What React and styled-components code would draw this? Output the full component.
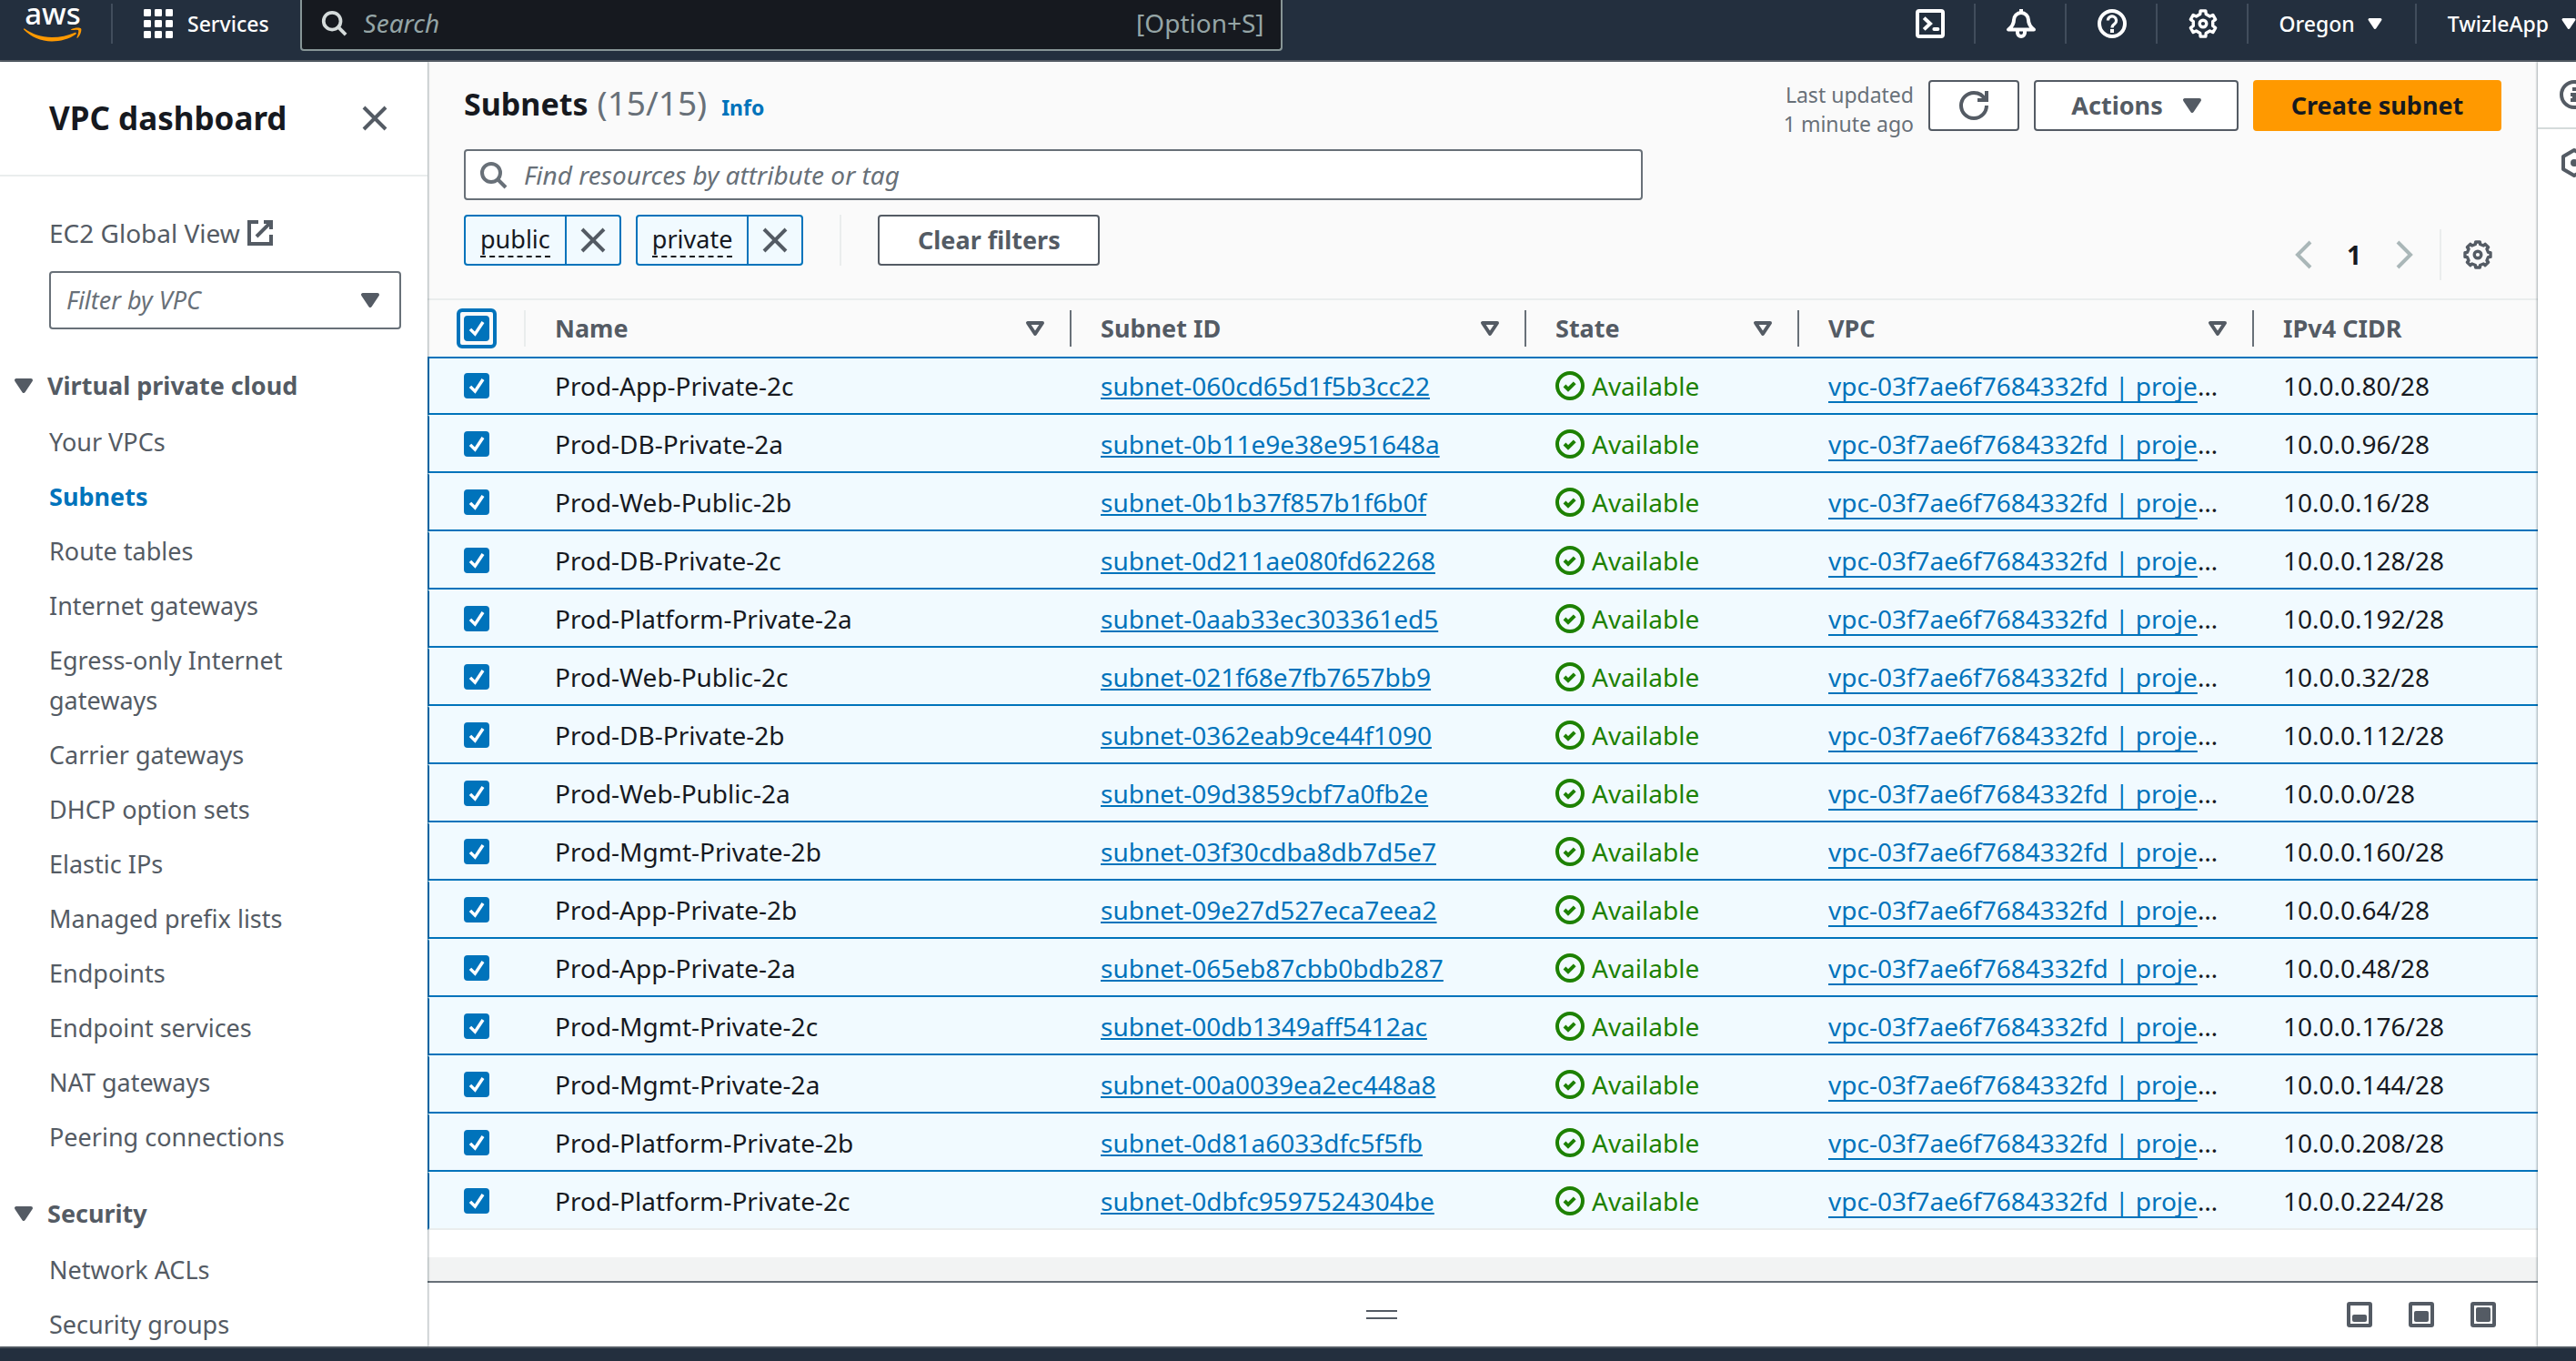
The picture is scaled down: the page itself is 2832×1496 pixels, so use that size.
import React from "react";
import styled, { createGlobalStyle, css } from "styled-components";

const c = {
  ink: "#16191f",
  slate: "#545b64",
  gray: "#687078",
  line: "#eaeded",
  blue: "#0073bb",
  selected: "#f1faff",
  green: "#1d8102",
  orange: "#ff9900",
  nav: "#232f3e",
  panel: "#fafafa",
  disabled: "#aab7b8",
};

const GlobalStyle = createGlobalStyle`
  *, *::before, *::after { box-sizing: border-box; }
  body {
    margin: 0;
    font-family: "Noto Sans", "Open Sans", sans-serif;
    font-size: 28px;
    line-height: 44px;
    color: ${c.ink};
    background: #fff;
  }
  button, input, select { font: inherit; color: inherit; margin: 0; }
  button { padding: 0; border: 0; background: none; cursor: pointer; }
  h1, h2, h3, ul { margin: 0; padding: 0; font: inherit; list-style: none; }
  svg { display: block; flex: none; }
`;

/* ---------- icons ---------- */

const Svg = styled.svg.attrs({ viewBox: "0 0 16 16", "aria-hidden": true })`
  width: ${(p) => p.$size || 32}px;
  height: ${(p) => p.$size || 32}px;
  fill: none;
  stroke: currentColor;
  stroke-width: ${(p) => p.$stroke || 2};
  overflow: visible;
`;

function gearPath(teeth, outer, inner, topHalf, baseHalf) {
  const pts = [];
  for (let i = 0; i < teeth; i++) {
    const a = -Math.PI / 2 + (i * 2 * Math.PI) / teeth;
    [
      [inner, -baseHalf],
      [outer, -topHalf],
      [outer, topHalf],
      [inner, baseHalf],
    ].forEach(([r, d]) => {
      pts.push(`${(8 + r * Math.cos(a + d)).toFixed(2)} ${(8 + r * Math.sin(a + d)).toFixed(2)}`);
    });
  }
  return `M${pts.join("L")}Z`;
}

const NavGear = gearPath(6, 7.2, 5.5, 0.2, 0.3);
const TableGear = gearPath(8, 7.1, 5.9, 0.17, 0.22);

const CloseIcon = () => (
  <Svg><path d="m2 2 12 12M14 2 2 14" /></Svg>
);
const SearchIcon = ({ size }) => (
  <Svg $size={size}><circle cx="7" cy="7" r="5" /><path d="m15 15-4.5-4.5" /></Svg>
);
const CaretFilled = ({ size }) => (
  <Svg $size={size}><path d="M4 5h8l-4 6z" fill="currentColor" strokeLinejoin="round" /></Svg>
);
const CaretOpen = () => (
  <Svg><path d="M4 5h8l-4 6z" strokeLinejoin="round" /></Svg>
);
const ExternalIcon = () => (
  <Svg><path d="M10 2h4v4M6 10l8-8M14 9v5H2V2h5" /></Svg>
);
const RefreshIcon = () => (
  <Svg><path d="M10 5h5V0" /><path d="M15 8a7 7 0 1 1-7-7 6.9 6.9 0 0 1 6.3 4" /></Svg>
);
const GearIcon = ({ d }) => (
  <Svg $stroke={1.7}><path d={d} strokeLinejoin="round" /><circle cx="8" cy="8" r="1.9" /></Svg>
);
const AngleLeft = () => (
  <Svg><path d="M11 1 4 8l7 7" /></Svg>
);
const AngleRight = () => (
  <Svg><path d="m5 1 7 7-7 7" /></Svg>
);
const StatusIcon = () => (
  <Svg><circle cx="8" cy="8" r="7" /><path d="m5 8 2 2 3.6-3.6" /></Svg>
);
const ShellIcon = () => (
  <Svg><rect x="1" y="1" width="14" height="14" rx="1" /><path d="m4.6 4.8 3.4 3.2-3.4 3.2" /><path d="M10.2 11h2" strokeLinecap="round" /></Svg>
);
const BellIcon = () => (
  <Svg>
    <path d="M8 0v2" />
    <path d="M8 2a4 4 0 0 0-4 4c0 2.400-1.200 3.900-3 5.300h14c-1.800-1.400-3-2.900-3-5.300a4 4 0 0 0-4-4z" strokeLinejoin="round" />
    <path d="M6 11.800v1.200a2 2 0 0 0 4 0v-1.200" />
  </Svg>
);
const HelpIcon = () => (
  <Svg>
    <circle cx="8" cy="8" r="7" />
    <path d="M5.700 6.300a2.300 2.300 0 1 1 3.700 1.800c-.9.600-1.400.9-1.400 2.200" strokeWidth="1.600" />
    <path d="M7 12h2" />
  </Svg>
);
const InfoIcon = () => (
  <Svg><circle cx="8" cy="8" r="7" /><path d="M8 11V8H6M6 11h4M7 5h2" /></Svg>
);
const HexIcon = () => (
  <Svg><path d="M8 1 14 4.500v7L8 15l-6-3.500v-7z" strokeLinejoin="round" /><circle cx="8" cy="8" r="1" /></Svg>
);
const GridIcon = () => (
  <Svg>
    {[0, 6, 12].map((y) =>
      [0, 6, 12].map((x) => (
        <rect key={`${x}-${y}`} x={x} y={y} width="4" height="4" rx="0.6" fill="currentColor" stroke="none" />
      ))
    )}
  </Svg>
);

/* ---------- shell ---------- */

const Shell = styled.div`
  display: flex;
  flex-direction: column;
  height: 100vh;
  overflow: hidden;
`;

const Body = styled.div`
  flex: 1;
  min-height: 0;
  display: flex;
`;

const Footer = styled.footer`
  flex: none;
  height: 16px;
  background: ${c.nav};
  border-top: 2px solid ${c.slate};
`;

/* ---------- top navigation ---------- */

const TopNav = styled.header`
  flex: none;
  display: flex;
  align-items: flex-start;
  height: 68px;
  background: ${c.nav};
  border-bottom: 2px solid ${c.slate};
  color: #fff;
  font-size: 23px;
  line-height: 32px;
`;

const Logo = styled.a`
  display: flex;
  flex-direction: column;
  align-items: center;
  width: 64px;
  margin: 0 32px 0 26px;
  color: #fff;
  text-decoration: none;
  font-size: 33px;
  font-weight: 500;
  line-height: 30px;
`;

const Smile = styled.svg`
  width: 64px;
  height: 16px;
`;

const NavDivider = styled.span`
  width: 2px;
  height: 44px;
  margin-top: 4px;
  background: #414d5c;
`;

const ServicesButton = styled.button`
  display: flex;
  align-items: center;
  gap: 16px;
  height: 52px;
  padding: 0 34px;
  font-weight: 500;
`;

const NavSearch = styled.label`
  flex: 0 1 1080px;
  display: flex;
  align-items: center;
  gap: 18px;
  height: 56px;
  padding: 0 18px 4px 20px;
  background: #16191f;
  border: 2px solid #879596;
  border-top: 0;
  border-radius: 0 0 4px 4px;
  font-size: 28px;
  color: #95a5a6;

  svg { color: #d5dbdb; }
`;

const NavSearchInput = styled.input`
  flex: 1;
  min-width: 0;
  border: 0;
  outline: 0;
  padding: 0;
  background: transparent;
  &::placeholder { color: #95a5a6; font-style: italic; opacity: 1; }
`;

const NavTools = styled.nav`
  display: flex;
  margin-left: auto;
`;

const NavItem = styled.button`
  display: flex;
  align-items: center;
  gap: 10px;
  height: 44px;
  margin-top: 4px;
  padding: 0 32px 0 34px;
  border-right: 2px solid #414d5c;
  font-weight: 500;
  white-space: nowrap;
  &:last-child { padding-right: 0; border-right: 0; margin-right: -4px; }
`;

/* ---------- side navigation ---------- */

const Side = styled.aside`
  flex: none;
  width: 470px;
  overflow: hidden;
  background: #fff;
  box-shadow: 1px 0 2px rgba(0, 28, 36, 0.35);
  z-index: 1;
  color: ${c.slate};
  font-size: 27px;
`;

const SideHeader = styled.div`
  display: flex;
  align-items: center;
  justify-content: space-between;
  height: 126px;
  padding: 0 42px 0 54px;
  border-bottom: 2px solid ${c.line};
`;

const SideTitle = styled.h2`
  font-size: 35px;
  font-weight: 700;
  color: ${c.ink};
`;

const IconButton = styled.button`
  display: grid;
  place-items: center;
  color: ${(p) => (p.$muted ? c.disabled : c.slate)};
`;

const SideTop = styled.div`
  padding: 40px 29px 0 54px;
  font-size: 28px;
`;

const SideLink = styled.a`
  display: flex;
  align-items: center;
  gap: 6px;
  color: ${c.slate};
  text-decoration: none;
  ${(p) =>
    p.$current &&
    css`
      color: ${c.blue};
      font-weight: 700;
    `}
`;

const SelectBox = styled.div`
  display: grid;
  align-items: center;
  margin-top: 20px;
  & > * { grid-area: 1 / 1; }
  svg { justify-self: end; margin-right: 18px; pointer-events: none; }
`;

const Select = styled.select`
  appearance: none;
  width: 100%;
  height: 64px;
  padding: 0 60px 0 17px;
  border: 2px solid ${c.gray};
  border-radius: 4px;
  background: #fff;
  color: ${c.gray};
  font-size: 27px;
  font-style: italic;
`;

const Section = styled.section`
  padding: ${(p) => (p.$first ? 40 : 32)}px 60px 0 10px;
`;

const SectionTitle = styled.button`
  display: flex;
  align-items: center;
  gap: 10px;
  font-weight: 700;
  line-height: 44px;
`;

const NavList = styled.ul`
  && { padding: 10px 0 0 44px; }
  li { padding: 8px 0; }
`;

/* ---------- main ---------- */

const Main = styled.main`
  flex: 1;
  min-width: 0;
  display: flex;
  flex-direction: column;
  background: #fff;
`;

const PageHeader = styled.div`
  padding: 20px 40px;
  background: ${c.panel};
  border-bottom: 2px solid ${c.line};
`;

const TitleRow = styled.div`
  display: flex;
  align-items: flex-start;
  justify-content: space-between;
`;

const Title = styled.div`
  display: flex;
  align-items: baseline;
  gap: 10px;
  font-size: 37px;
  line-height: 50px;
  h1 { font-weight: 700; font-size: 34px; }
  span { color: ${c.gray}; }
`;

const InfoLink = styled.a`
  margin-left: 6px;
  font-size: 23px;
  font-weight: 700;
  color: ${c.blue};
  text-decoration: none;
`;

const Actions = styled.div`
  display: flex;
  gap: 16px;
`;

const Updated = styled.div`
  display: flex;
  flex-direction: column;
  align-items: flex-end;
  font-size: 23px;
  line-height: 32px;
  color: ${c.gray};
  white-space: nowrap;
`;

const Button = styled.button`
  display: flex;
  align-items: center;
  justify-content: center;
  gap: 16px;
  height: 56px;
  min-width: ${(p) => p.$min || 0}px;
  padding: ${(p) => (p.$menu ? "0 30px 0 36px" : "0 16px")};
  border: 2px solid ${(p) => (p.$primary ? c.orange : c.slate)};
  border-radius: 4px;
  background: ${(p) => (p.$primary ? c.orange : "#fff")};
  color: ${(p) => (p.$primary ? c.ink : c.slate)};
  font-weight: 700;
  font-size: 27px;
  white-space: nowrap;
`;

const Toolbar = styled.div`
  display: flex;
  align-items: flex-end;
  justify-content: space-between;
  gap: 40px;
  margin-top: 12px;
`;

const Filters = styled.div`
  flex: 0 1 1296px;
  display: flex;
  flex-direction: column;
  gap: 16px;
  padding-bottom: 16px;
`;

const SearchBox = styled.label`
  display: flex;
  align-items: center;
  gap: 18px;
  height: 56px;
  padding: 0 14px;
  border: 2px solid ${c.gray};
  border-radius: 4px;
  background: #fff;
  color: ${c.gray};
`;

const SearchInput = styled.input`
  flex: 1;
  min-width: 0;
  border: 0;
  outline: 0;
  padding: 0;
  background: transparent;
  &::placeholder { color: ${c.gray}; font-style: italic; opacity: 1; }
`;

const Tokens = styled.div`
  display: flex;
  gap: 16px;
`;

const Token = styled.div`
  display: flex;
  height: 56px;
  border: 2px solid ${c.blue};
  border-radius: 4px;
  background: ${c.selected};
`;

const TokenText = styled.button`
  margin: 7px 16px 0;
  height: 38px;
  font-size: 27px;
  line-height: 36px;
  border-bottom: 2px dashed ${c.ink};
`;

const TokenRemove = styled.button`
  display: grid;
  place-items: center;
  width: 60px;
  border-left: 2px solid ${c.blue};
  color: ${c.slate};
`;

const Rule = styled.span`
  width: 2px;
  height: 56px;
  margin: 0 24px;
  background: ${c.line};
`;

const Pagination = styled.div`
  display: flex;
  align-items: center;
  height: 56px;
  padding-right: 10px;
`;

const PageNumber = styled.button`
  width: 76px;
  font-weight: 700;
  text-align: center;
`;

/* ---------- table ---------- */

const Table = styled.table`
  width: 100%;
  table-layout: fixed;
  border-collapse: separate;
  border-spacing: 0;
  text-align: left;
`;

const Col = styled.col`
  width: ${(p) => (p.$w ? `${p.$w}px` : "auto")};
`;

const Th = styled.th`
  height: 62px;
  padding: 0;
  background: ${c.panel};
  color: ${c.slate};
  font-size: 27px;
  font-weight: 700;
`;

const ThInner = styled.div`
  display: flex;
  align-items: center;
  justify-content: space-between;
  height: 40px;
  padding: 0 22px 0 32px;
  border-right: ${(p) => (p.$last ? "0" : `2px solid ${p.$check ? c.line : c.gray}`)};
`;

const Td = styled.td`
  height: 64px;
  padding: 0 22px 0 32px;
  background: ${c.selected};
  border-top: 2px solid transparent;
  border-bottom: 2px solid ${c.blue};
  white-space: nowrap;

  &:first-child { padding-left: 38px; border-left: 2px solid ${c.blue}; }
  tr:first-child > & { border-top-color: ${c.blue}; }
  tr:last-child > & { border-bottom-color: ${c.line}; }
`;

const Check = styled.span`
  display: grid;
  place-items: center;
  width: ${(p) => (p.$focus ? 44 : 28)}px;
  height: ${(p) => (p.$focus ? 44 : 28)}px;
  & > * { grid-area: 1 / 1; }
  ${(p) =>
    p.$focus &&
    css`
      flex: none;
      border: 4px solid ${c.blue};
      border-radius: 6px;
    `}
  svg { pointer-events: none; color: #fff; visibility: hidden; }
  input:checked + svg { visibility: visible; }
`;

const CheckInput = styled.input`
  appearance: none;
  width: 28px;
  height: 28px;
  border: 2px solid ${c.gray};
  border-radius: 4px;
  background: #fff;
  &:checked { background: ${c.blue}; border-color: ${c.blue}; }
`;

const Link = styled.a`
  color: ${c.blue};
  text-decoration: underline;
  text-decoration-thickness: 2px;
  text-decoration-skip-ink: none;
  text-underline-offset: ${(p) => (p.$low ? 6 : 2)}px;
`;

const Status = styled.span`
  display: flex;
  align-items: center;
  gap: 8px;
  color: ${c.green};
`;

/* ---------- bottom split panel ---------- */

const Gap = styled.div`
  flex: none;
  height: 30px;
`;

const Backdrop = styled.div`
  flex: 1;
  background: #f2f3f3;
`;

const SplitPanel = styled.div`
  flex: none;
  display: flex;
  align-items: center;
  height: 72px;
  border-top: 2px solid ${c.gray};
  color: ${c.slate};
`;

const DragArea = styled.div`
  flex: 1;
  display: grid;
  place-items: center;
`;

const DragHandle = styled.button`
  width: 34px;
  height: 10px;
  border-top: 2px solid ${c.slate};
  border-bottom: 2px solid ${c.slate};
`;

const SizeButtons = styled.div`
  display: flex;
  gap: 40px;
  padding: 0 46px 0 12px;
  svg { width: 28px; height: 28px; fill: currentColor; }
`;

const ToolPanel = styled.aside`
  flex: none;
  width: 42px;
  overflow: hidden;
  background: #fff;
  box-shadow: -1px 0 2px rgba(0, 28, 36, 0.35);
  color: ${c.slate};
  z-index: 1;
`;

const ToolButton = styled.button`
  display: flex;
  align-items: center;
  width: 80px;
  height: 74px;
  padding-left: 24px;
  border-bottom: ${(p) => (p.$line ? "2px solid #d5dbdb" : "0")};
`;

/* ---------- data ---------- */

const VPC_LINKS = [
  "Your VPCs",
  "Subnets",
  "Route tables",
  "Internet gateways",
  "Egress-only Internet gateways",
  "Carrier gateways",
  "DHCP option sets",
  "Elastic IPs",
  "Managed prefix lists",
  "Endpoints",
  "Endpoint services",
  "NAT gateways",
  "Peering connections",
];
const SECURITY_LINKS = ["Network ACLs", "Security groups"];

const ROWS = [
  ["Prod-App-Private-2c", "subnet-060cd65d1f5b3cc22", "10.0.0.80/28"],
  ["Prod-DB-Private-2a", "subnet-0b11e9e38e951648a", "10.0.0.96/28"],
  ["Prod-Web-Public-2b", "subnet-0b1b37f857b1f6b0f", "10.0.0.16/28"],
  ["Prod-DB-Private-2c", "subnet-0d211ae080fd62268", "10.0.0.128/28"],
  ["Prod-Platform-Private-2a", "subnet-0aab33ec303361ed5", "10.0.0.192/28"],
  ["Prod-Web-Public-2c", "subnet-021f68e7fb7657bb9", "10.0.0.32/28"],
  ["Prod-DB-Private-2b", "subnet-0362eab9ce44f1090", "10.0.0.112/28"],
  ["Prod-Web-Public-2a", "subnet-09d3859cbf7a0fb2e", "10.0.0.0/28"],
  ["Prod-Mgmt-Private-2b", "subnet-03f30cdba8db7d5e7", "10.0.0.160/28"],
  ["Prod-App-Private-2b", "subnet-09e27d527eca7eea2", "10.0.0.64/28"],
  ["Prod-App-Private-2a", "subnet-065eb87cbb0bdb287", "10.0.0.48/28"],
  ["Prod-Mgmt-Private-2c", "subnet-00db1349aff5412ac", "10.0.0.176/28"],
  ["Prod-Mgmt-Private-2a", "subnet-00a0039ea2ec448a8", "10.0.0.144/28"],
  ["Prod-Platform-Private-2b", "subnet-0d81a6033dfc5f5fb", "10.0.0.208/28"],
  ["Prod-Platform-Private-2c", "subnet-0dbfc9597524304be", "10.0.0.224/28"],
];

const COLUMNS = ["Name", "Subnet ID", "State", "VPC", "IPv4 CIDR"];

function Checkbox({ label, focus }) {
  return (
    <Check $focus={focus}>
      <CheckInput type="checkbox" defaultChecked aria-label={label} />
      <Svg $size={28}><path d="m4 8.500 3 3 5-7.500" /></Svg>
    </Check>
  );
}

function SideSection({ title, links, current, first }) {
  return (
    <Section $first={first}>
      <SectionTitle><CaretFilled />{title}</SectionTitle>
      <NavList>
        {links.map((l) => (
          <li key={l}><SideLink href="#" $current={l === current}>{l}</SideLink></li>
        ))}
      </NavList>
    </Section>
  );
}

export default function App() {
  return (
    <Shell>
      <GlobalStyle />
      <TopNav>
        <Logo href="#" aria-label="aws">
          aws
          <Smile viewBox="0 0 64 16" fill="#ff9900" aria-hidden="true">
            <path d="M1 1.500c9 6 18 9.500 30 9.500 9 0 18-2 25-5 1.500-.6 2.500.8 1.200 1.800C50 13 40 15.500 31 15.500 19 15.500 8 10.500.4 2.800-.3 2 .2 1 1 1.500z" />
            <path d="M52 2.500C55.500.3 61.500 0 63 1.200c1.200 1.300-.3 7.600-3.500 10.400-.7.500-1.300.2-1-.6.9-2.300 2.400-6.600 1.600-7.700-.8-1-5-.5-7.400-.2-.8.1-1.200-.2-.7-.6z" />
          </Smile>
        </Logo>
        <NavDivider />
        <ServicesButton><GridIcon />Services</ServicesButton>
        <NavSearch>
          <SearchIcon size={30} />
          <NavSearchInput type="text" placeholder="Search" aria-label="Search" />
          <span>[Option+S]</span>
        </NavSearch>
        <NavTools>
          <NavItem aria-label="CloudShell"><ShellIcon /></NavItem>
          <NavItem aria-label="Notifications"><BellIcon /></NavItem>
          <NavItem aria-label="Support"><HelpIcon /></NavItem>
          <NavItem aria-label="Settings"><GearIcon d={NavGear} /></NavItem>
          <NavItem>Oregon<CaretFilled size={24} /></NavItem>
          <NavItem>TwizleApp<CaretFilled size={24} /></NavItem>
        </NavTools>
      </TopNav>

      <Body>
        <Side>
          <SideHeader>
            <SideTitle>VPC dashboard</SideTitle>
            <IconButton aria-label="Close"><CloseIcon /></IconButton>
          </SideHeader>
          <SideTop>
            <SideLink href="#">EC2 Global View<ExternalIcon /></SideLink>
            <SelectBox>
              <Select aria-label="Filter by VPC"><option>Filter by VPC</option></Select>
              <CaretFilled />
            </SelectBox>
          </SideTop>
          <SideSection first title="Virtual private cloud" links={VPC_LINKS} current="Subnets" />
          <SideSection title="Security" links={SECURITY_LINKS} />
        </Side>

        <Main>
          <PageHeader>
            <TitleRow>
              <Title>
                <h1>Subnets</h1>
                <span>(15/15)</span>
                <InfoLink href="#">Info</InfoLink>
              </Title>
              <Actions>
                <Updated><span>Last updated</span><span>1 minute ago</span></Updated>
                <Button $min={100} aria-label="Refresh"><RefreshIcon /></Button>
                <Button $menu $min={225}>Actions<CaretFilled /></Button>
                <Button $primary $min={273}>Create subnet</Button>
              </Actions>
            </TitleRow>
            <Toolbar>
              <Filters>
                <SearchBox>
                  <SearchIcon />
                  <SearchInput
                    type="text"
                    placeholder="Find resources by attribute or tag"
                    aria-label="Find resources by attribute or tag"
                  />
                </SearchBox>
                <Tokens>
                  {["public", "private"].map((t) => (
                    <Token key={t}>
                      <TokenText>{t}</TokenText>
                      <TokenRemove aria-label={`Remove ${t}`}><CloseIcon /></TokenRemove>
                    </Token>
                  ))}
                  <Rule />
                  <Button $min={244}>Clear filters</Button>
                </Tokens>
              </Filters>
              <Pagination>
                <IconButton $muted aria-label="Previous page"><AngleLeft /></IconButton>
                <PageNumber>1</PageNumber>
                <IconButton $muted aria-label="Next page"><AngleRight /></IconButton>
                <Rule />
                <IconButton aria-label="Preferences"><GearIcon d={TableGear} /></IconButton>
              </Pagination>
            </Toolbar>
          </PageHeader>

          <Table>
            <colgroup>
              <Col $w={108} /><Col $w={600} /><Col $w={500} /><Col $w={300} /><Col $w={500} /><Col />
            </colgroup>
            <thead>
              <tr>
                <Th><ThInner $check><Checkbox focus label="Select all subnets" /></ThInner></Th>
                {COLUMNS.map((name, i) => (
                  <Th key={name}>
                    <ThInner $last={i === COLUMNS.length - 1}>
                      {name}
                      {i < COLUMNS.length - 1 && (
                        <IconButton aria-label={`Sort by ${name}`}><CaretOpen /></IconButton>
                      )}
                    </ThInner>
                  </Th>
                ))}
              </tr>
            </thead>
            <tbody>
              {ROWS.map(([name, id, cidr]) => (
                <tr key={id}>
                  <Td><Checkbox label={`Select ${name}`} /></Td>
                  <Td>{name}</Td>
                  <Td><Link href="#">{id}</Link></Td>
                  <Td><Status><StatusIcon />Available</Status></Td>
                  <Td><Link href="#" $low>vpc-03f7ae6f7684332fd | proje</Link>…</Td>
                  <Td>{cidr}</Td>
                </tr>
              ))}
            </tbody>
          </Table>
          <Gap />
          <Backdrop />
          <SplitPanel>
            <DragArea><DragHandle aria-label="Resize panel" /></DragArea>
            <SizeButtons>
              {[8, 12, 16].map((h) => (
                <IconButton key={h} aria-label={`Panel size ${h}`}>
                  <svg viewBox="0 0 28 28" aria-hidden="true">
                    <rect x="2" y="2" width="24" height="24" rx="1" fill="none" stroke="currentColor" strokeWidth="4" />
                    <rect x="6" y={22 - h} width="16" height={h} rx="2" />
                  </svg>
                </IconButton>
              ))}
            </SizeButtons>
          </SplitPanel>
        </Main>

        <ToolPanel>
          <ToolButton $line aria-label="Info"><InfoIcon /></ToolButton>
          <ToolButton aria-label="Shortcuts"><HexIcon /></ToolButton>
        </ToolPanel>
      </Body>
      <Footer />
    </Shell>
  );
}
